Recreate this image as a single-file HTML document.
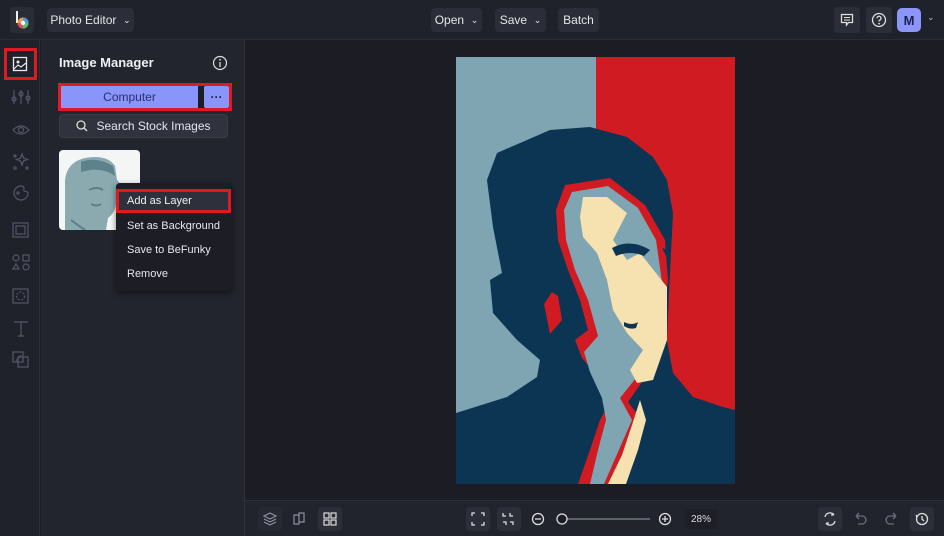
<!DOCTYPE html>
<html><head><meta charset="utf-8"><style>
*{box-sizing:border-box;margin:0;padding:0}
body{width:944px;height:536px;overflow:hidden;background:#1b1c24;font-family:"Liberation Sans",sans-serif;color:#d8dae2;position:relative}
.abs{position:absolute}
.top{left:0;top:0;width:944px;height:40px;background:#20222b;border-bottom:1px solid #2a2c36}
.side{left:0;top:40px;width:40px;height:496px;background:#20222b;border-right:1px solid #2c2e38}
.panel{left:41px;top:40px;width:204px;height:496px;background:#23252e;border-right:1px solid #30323c}
.btn{background:#2b2d38;border-radius:4px;font-size:12px;color:#e4e6ee;display:flex;align-items:center;justify-content:center}
.bot{left:245px;top:500px;width:699px;height:36px;background:#22242d;border-top:1px solid #2b2d37}
.ib{width:24px;height:24px;border-radius:4px;background:#2b2d38}
.menu{left:116px;top:183px;width:116px;height:108px;background:#1c1d25;border-radius:4px;box-shadow:0 2px 6px rgba(0,0,0,.5);font-size:11px;color:#e6e8ef}
.menu div{position:absolute;left:11px}
</style></head><body>
<div class="abs top"></div>
<div class="abs" style="left:10px;top:7px;width:24px;height:26px;background:#2a2c36;border-radius:4px"></div>
<svg class="abs" style="left:13px;top:9px" width="18" height="22"><rect x="3" y="2" width="2" height="12" fill="#eee"/><circle cx="10" cy="14" r="5.5" fill="#e9a23b"/><path d="M10 8.5A5.5 5.5 0 0 1 15.5 14H10z" fill="#4a9be8"/><path d="M10 14h5.5A5.5 5.5 0 0 1 10 19.5z" fill="#56c06a"/><path d="M10 14v5.5A5.5 5.5 0 0 1 4.5 14z" fill="#e04a5a"/><circle cx="10" cy="14" r="2.2" fill="#fff"/></svg>
<div class="abs btn" style="left:47px;top:8px;width:87px;height:24px;font-size:12px">Photo Editor&nbsp;&nbsp;<span style="font-size:9px">⌄</span></div>
<div class="abs btn" style="left:431px;top:8px;width:51px;height:24px">Open&nbsp;&nbsp;<span style="font-size:9px">⌄</span></div>
<div class="abs btn" style="left:495px;top:8px;width:51px;height:24px">Save&nbsp;&nbsp;<span style="font-size:9px">⌄</span></div>
<div class="abs btn" style="left:558px;top:8px;width:41px;height:24px">Batch</div>
<div class="abs btn" style="left:834px;top:7px;width:26px;height:26px"><svg width="14" height="14"><path d="M1.5 1.5h11v8h-4l-2 2.5v-2.5h-5z" fill="none" stroke="#ddd" stroke-width="1.3"/><path d="M4 4.5h6M4 7h6" stroke="#ddd"/></svg></div>
<div class="abs btn" style="left:866px;top:7px;width:26px;height:26px"><svg width="16" height="16"><circle cx="8" cy="8" r="6.5" fill="none" stroke="#ddd" stroke-width="1.3"/><path d="M6 6.3a2 2 0 1 1 2.5 1.9c-.5.2-.5.6-.5 1.3" fill="none" stroke="#ddd" stroke-width="1.3"/><circle cx="8" cy="11.6" r=".9" fill="#ddd"/></svg></div>
<div class="abs" style="left:897px;top:8px;width:24px;height:24px;border-radius:5px;background:#8c96f8;color:#1c2150;font-size:13px;font-weight:bold;display:flex;align-items:center;justify-content:center">M</div>
<div class="abs" style="left:927px;top:12px;font-size:9px;color:#bbb">⌄</div>

<div class="abs side"></div>
<div class="abs" style="left:4px;top:48px;width:33px;height:32px;border:3px solid #e01a22"></div>
<svg class="abs" style="left:12px;top:56px" width="16" height="16"><rect x="1.5" y="1.5" width="13" height="13" fill="none" stroke="#e8e8ee" stroke-width="1.3"/><circle cx="6" cy="6" r="1.5" fill="#e8e8ee"/><path d="M2 13l4-4 3 2 5-4" fill="none" stroke="#e8e8ee" stroke-width="1.2"/></svg>
<svg class="abs" style="left:10px;top:86px" width="22" height="300" fill="none" stroke="#535668" stroke-width="1.2">
<path d="M4 4v14M11 4v14M18 4v14"/><circle cx="4" cy="13" r="2"/><circle cx="11" cy="8" r="2"/><circle cx="18" cy="12" r="2"/>
<path d="M3 44q8-8 16 0q-8 8-16 0z"/><circle cx="11" cy="44" r="2.5"/>
<path d="M12 68l1.5 4 4 1.5-4 1.5-1.5 4-1.5-4-4-1.5 4-1.5z"/><circle cx="5" cy="70" r="1"/><circle cx="5" cy="82" r="1.2"/><circle cx="17" cy="82" r="1"/>
<path d="M11 100a7 7 0 1 0 7 7c0-2-3-1-4-2s2-5-3-5z"/><circle cx="8" cy="107" r="1"/>
<rect x="3" y="137" width="15" height="14"/><rect x="6" y="140" width="9" height="8"/>
<circle cx="6" cy="172" r="3"/><rect x="13" y="169" width="6" height="6"/><path d="M6 178l3 5h-6z"/><circle cx="16" cy="181" r="3"/>
<rect x="3" y="203" width="15" height="14"/><circle cx="10.5" cy="210" r="4" stroke-dasharray="2 1.5"/>
<path d="M4 236h14M11 236v14M8 250h6"/>
<rect x="3" y="266" width="10" height="10"/><rect x="8" y="271" width="10" height="10"/><path d="M6 275l5-6"/>
</svg>

<div class="abs panel"></div>
<div class="abs" style="left:59px;top:55px;font-size:13px;font-weight:bold;color:#f0f1f5">Image Manager</div>
<svg class="abs" style="left:212px;top:55px" width="16" height="16"><circle cx="8" cy="8" r="6.5" fill="none" stroke="#ddd" stroke-width="1.2"/><path d="M8 7v5" stroke="#ddd" stroke-width="1.3"/><circle cx="8" cy="4.8" r=".9" fill="#ddd"/></svg>
<div class="abs" style="left:58px;top:83px;width:174px;height:28px;border:3px solid #e01a22;background:#1c1d25"></div>
<div class="abs" style="left:61px;top:86px;width:137px;height:22px;background:#8a95fa;color:#2a2f70;font-size:12px;display:flex;align-items:center;justify-content:center">Computer</div>
<div class="abs" style="left:204px;top:86px;width:25px;height:22px;background:#8a95fa;color:#1e2250;font-size:12px;font-weight:bold;display:flex;align-items:center;justify-content:center;border-radius:2px">···</div>
<div class="abs btn" style="left:59px;top:114px;width:169px;height:24px;background:#30323d;border:1px solid #3a3c48"><svg width="12" height="12" style="margin-right:8px"><circle cx="5" cy="5" r="4" fill="none" stroke="#ddd" stroke-width="1.3"/><path d="M8 8l3 3" stroke="#ddd" stroke-width="1.4"/></svg>Search Stock Images</div>
<div class="abs" style="left:59px;top:150px;width:81px;height:80px;background:#f4f5f5;border-radius:4px;overflow:hidden"><svg width="81" height="80"><path d="M6 80V30q2-18 20-22q22-4 30 8l2 14q5 4 3 14l-4 8q0 10-8 16l-2 12z" fill="#8aaab0"/><path d="M22 12q15-6 32 4l2 10q-14-10-34-4z" fill="#5e8289"/><path d="M30 40q8-4 14 0M32 54q6 3 10 0M12 70q8 6 14 10" stroke="#5c7f86" stroke-width="2" fill="none"/></svg></div>
<div class="abs menu">
<div style="top:13px">Add as Layer</div>
<div style="top:37px">Set as Background</div>
<div style="top:61px">Save to BeFunky</div>
<div style="top:85px">Remove</div>
</div>
<div class="abs" style="left:116px;top:189px;width:115px;height:24px;border:3px solid #e01a22;background:#2e303b"></div>
<div class="abs" style="left:127px;top:195px;font-size:11px;color:#f0f1f5">Add as Layer</div>

<svg class="abs" style="left:456px;top:57px" width="279" height="427" viewBox="456 57 279 427">
<rect x="456" y="57" width="140" height="427" fill="#7ea5b1"/>
<rect x="596" y="57" width="139" height="427" fill="#d11b22"/>
<path d="M456 413L507 397 537 377 540 360 517 340 493 313 490 280 502 273 493 227 487 180 497 153 527 140 550 130 590 127 627 137 653 157 667 180 673 213 670 273 667 340 673 373 693 397 723 407 735 410V484H456z" fill="#0b3553"/>
<path d="M565 185L610 178 645 205 665 240 668 280 662 330 656 362 642 382 628 402 642 420 628 452 612 484H578L590 450 600 420 612 398 596 375 582 358 575 340 588 330 580 300 568 270 558 240 556 210z" fill="#d11b22"/>
<path d="M572 192L608 186 638 208 656 240 662 282 657 330 650 360 636 378 620 398 632 420 618 452 604 484H590L598 450 606 420 602 398 590 372 584 352 598 336 588 300 575 270 566 240 564 210z" fill="#7ea5b1"/>
<path d="M583 197L607 197 627 213 613 240 627 260 640 253 667 287 667 340 653 380 637 383 630 370 643 350 627 333 613 310 607 280 597 253 583 237 580 217z" fill="#f6e2b0"/>
<path d="M608 484L622 455 632 425 640 400 646 420 638 450 626 484z" fill="#f6e2b0"/>
<path d="M612 248q18-10 38 2l-6 6q-14-6-28 0z" fill="#0b3553"/>
<path d="M624 322q8 4 14 0l-2 6q-6 2-12-2z" fill="#0b3553"/>
<path d="M552 292l-8 12 6 30 12-14-4-24z" fill="#d11b22"/>
<path d="M662 248l6 2-2 6z" fill="#0b3553"/>
</svg>

<div class="abs bot"></div>
<svg class="abs" style="left:258px;top:507px" width="90" height="24" fill="none" stroke="#8d90a0" stroke-width="1.2">
<rect x="0" y="0" width="24" height="24" rx="4" fill="#262832" stroke="none"/>
<path d="M12 6l6 3-6 3-6-3zM6 12l6 3 6-3M6 15l6 3 6-3"/>
<path d="M36 8h5v9h-5zM41 6h5v9h-5z"/>
<rect x="60" y="0" width="24" height="24" rx="4" fill="#2c2e39" stroke="none"/>
<rect x="66" y="6" width="5" height="5" stroke="#ddd"/><rect x="73" y="6" width="5" height="5" stroke="#ddd"/><rect x="66" y="13" width="5" height="5" stroke="#ddd"/><rect x="73" y="13" width="5" height="5" stroke="#ddd"/>
</svg>
<div class="abs ib" style="left:466px;top:507px;background:#2c2e39"></div>
<div class="abs ib" style="left:497px;top:507px;background:#2c2e39"></div>
<svg class="abs" style="left:466px;top:507px" width="250" height="24" fill="none" stroke="#ddd" stroke-width="1.3">
<path d="M6 9V6h3M15 6h3v3M18 15v3h-3M9 18H6v-3"/>
<path d="M37 6v3h3M47 9h-3V6M37 15h3v3M47 18v-3h-3"/>
<circle cx="72" cy="12" r="5.5"/><path d="M69 12h6"/>
<path d="M100 12h84" stroke="#888"/><circle cx="96" cy="12" r="5" fill="#1b1c24"/>
<circle cx="199" cy="12" r="5.5"/><path d="M196 12h6M199 9v6"/>
</svg>
<div class="abs" style="left:685px;top:509px;width:32px;height:20px;background:#1d1e26;color:#ddd;font-size:10px;display:flex;align-items:center;justify-content:center">28%</div>
<div class="abs ib" style="left:818px;top:507px;background:#2c2e39"></div>
<div class="abs ib" style="left:910px;top:507px;background:#2c2e39"></div>
<svg class="abs" style="left:818px;top:507px" width="116" height="24" fill="none" stroke-width="1.3">
<path d="M7 10a5 5 0 0 1 9-2M17 14a5 5 0 0 1-9 2M15 6v2h-2M9 18v-2h2" stroke="#ddd"/>
<path d="M38 9h6a4 4 0 0 1 0 8h-4M38 9l3-3M38 9l3 3" stroke="#6a6d7c"/>
<path d="M78 9h-6a4 4 0 0 0 0 8h4M78 9l-3-3M78 9l-3 3" stroke="#6a6d7c"/>
<circle cx="104" cy="12" r="5.5" stroke="#ddd"/><path d="M104 9v3l2 2M98 8l1 2" stroke="#ddd"/>
</svg>
</body></html>
